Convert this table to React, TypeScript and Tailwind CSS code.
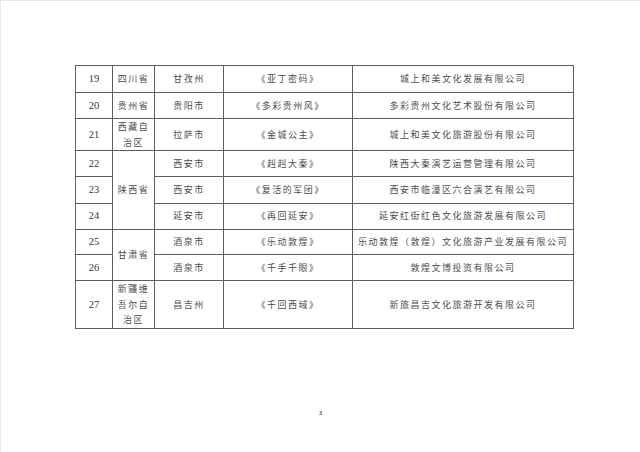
const rows: { no: string; prov?: { text: string[]; span: number }; city: string; show: string; company: string; h: string }[] = [
  { no: '19', prov: { text: ['四川省'], span: 1 }, city: '甘孜州', show: '《亚丁密码》', company: '城上和美文化发展有限公司', h: 'h-[26.5px]' },
  { no: '20', prov: { text: ['贵州省'], span: 1 }, city: '贵阳市', show: '《多彩贵州风》', company: '多彩贵州文化艺术股份有限公司', h: 'h-[26.5px]' },
  { no: '21', prov: { text: ['西藏自', '治区'], span: 1 }, city: '拉萨市', show: '《金城公主》', company: '城上和美文化旅游股份有限公司', h: 'h-[31px]' },
  { no: '22', prov: { text: ['陕西省'], span: 3 }, city: '西安市', show: '《赳赳大秦》', company: '陕西大秦演艺运营管理有限公司', h: 'h-[26px]' },
  { no: '23', city: '西安市', show: '《复活的军团》', company: '西安市临潼区六合演艺有限公司', h: 'h-[26.5px]' },
  { no: '24', city: '延安市', show: '《再回延安》', company: '延安红街红色文化旅游发展有限公司', h: 'h-[26px]' },
  { no: '25', prov: { text: ['甘肃省'], span: 2 }, city: '酒泉市', show: '《乐动敦煌》', company: '乐动敦煌（敦煌）文化旅游产业发展有限公司', h: 'h-[25.6px]' },
  { no: '26', city: '酒泉市', show: '《千手千眼》', company: '敦煌文博投资有限公司', h: 'h-[26px]' },
  { no: '27', prov: { text: ['新疆维', '吾尔自', '治区'], span: 1 }, city: '昌吉州', show: '《千回西域》', company: '新旅昌吉文化旅游开发有限公司', h: 'h-[46.5px]' },
]

const cjk = "font-['Noto_Sans_CJK_SC',sans-serif]"

export default function App() {
  return (
    <div className="w-[640px] h-[452px] bg-white border-t border-l border-[#e6e6e6] overflow-hidden">
      <table className="ml-[74px] mt-[64px] w-[498px] table-fixed border-collapse text-[#4d4d4d] text-[9px] leading-[15.5px]">
        <colgroup>
          <col className="w-[37px]" />
          <col className="w-[42px]" />
          <col className="w-[69px]" />
          <col className="w-[129px]" />
          <col className="w-[221px]" />
        </colgroup>
        <tbody>
          {rows.map((r) => (
            <tr key={r.no} className={r.h}>
              <td className="border border-[#5c5c5c] p-0 text-center align-middle font-['Liberation_Serif',serif] text-[10.5px] text-[#383838]">{r.no}</td>
              {r.prov && (
                <td rowSpan={r.prov.span} className={`border border-[#5c5c5c] p-0 text-center align-middle tracking-[1.5px] ${cjk}`}>
                  {r.prov.text.map((t) => (
                    <div key={t}>{t}</div>
                  ))}
                </td>
              )}
              <td className={`border border-[#5c5c5c] p-0 text-center align-middle tracking-[1.5px] ${cjk}`}>{r.city}</td>
              <td className={`border border-[#5c5c5c] p-0 text-center align-middle tracking-[1.5px] ${cjk}`}>{r.show}</td>
              <td className={`border border-[#5c5c5c] p-0 text-center align-middle tracking-[1.5px] whitespace-nowrap ${cjk}`}>{r.company}</td>
            </tr>
          ))}
        </tbody>
      </table>
      <div className="mt-[80px] text-center font-['Liberation_Serif',serif] text-[6px] font-bold leading-[8px] text-[#2b3a55]">3</div>
    </div>
  )
}
